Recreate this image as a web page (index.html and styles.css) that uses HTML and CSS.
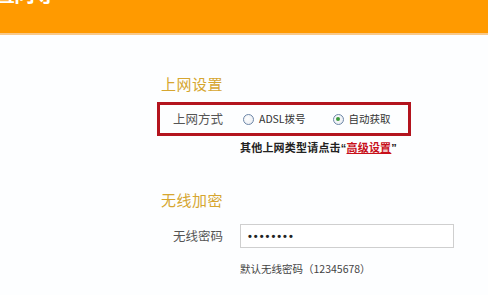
FILE: index.html
```html
<!DOCTYPE html>
<html lang="zh-CN">
<head>
<meta charset="utf-8">
<title>设置向导</title>
<link rel="stylesheet" href="styles.css">
</head>
<body>
<div class="header"><div class="title">设置向导</div></div>
<div class="main">
  <div class="section-title">上网设置</div>
  <div class="mode-box">
    <span class="label">上网方式</span>
    <span class="radio"></span><span class="opt">ADSL拨号</span>
    <span class="radio checked gap"></span><span class="opt">自动获取</span>
  </div>
  <div class="hint bold">其他上网类型请点击<span class="q">“</span><a class="link" href="#">高级设置</a><span class="q">”</span></div>
  <div class="section-title second">无线加密</div>
  <div class="row">
    <span class="label">无线密码</span>
    <div class="input"><span class="dots">••••••••</span></div>
  </div>
  <div class="hint note">默认无线密码（12345678）</div>
</div>
</body>
</html>
```
FILE: styles.css
```css
* { box-sizing: border-box; }
html, body { margin: 0; padding: 0; background: #fdfeff; }
body {
  width: 488px; height: 295px; overflow: hidden;
  font-family: "Noto Sans CJK SC", "Liberation Sans", sans-serif;
}
.header {
  height: 35px;
  background: #ff9a00;
  border-bottom: 2px solid #f8c98c;
  overflow: hidden;
}
.title {
  color: #fff;
  font-size: 21px;
  line-height: 21px;
  font-weight: bold;
  margin-top: -18px;
  margin-left: -26px;
  letter-spacing: -1px;
}
.main { padding: 41px 0 0 157px; }
.section-title {
  color: #d6a630;
  font-size: 15px;
  line-height: 16px;
  padding-left: 4px;
  letter-spacing: 0.5px;
}
.section-title.second { margin-top: 37px; }
.mode-box {
  margin-top: 10px;
  width: 254px;
  height: 34px;
  border: 3px solid #b3141e;
  display: flex;
  align-items: center;
  padding-left: 13px;
}
.label {
  width: 70px;
  font-size: 12.5px;
  color: #555;
  line-height: 14px;
}
.radio {
  width: 11px; height: 11px;
  border-radius: 50%;
  border: 1px solid #6c86a8;
  background: radial-gradient(circle at 40% 40%, #fff 0, #e4e8ee 100%);
  display: flex; align-items: center; justify-content: center;
  margin-right: 5px;
}
.radio.gap { margin-left: 27px; }
.radio.checked::after {
  content: "";
  width: 4px; height: 4px; border-radius: 50%;
  background: #3a9a3a;
}
.opt { font-size: 10.5px; color: #333; line-height: 14px; }
.hint {
  margin-left: 83px;
  font-size: 11px;
  line-height: 14px;
  color: #222;
}
.hint.bold { margin-top: 4px; font-weight: bold; letter-spacing: 0.2px; }
.q { font-family: "Liberation Sans", sans-serif; }
.link { color: #c8101a; text-decoration: underline; }
.row {
  margin-top: 16px;
  display: flex;
  align-items: center;
  padding-left: 16px;
}
.row .label { width: 67px; }
.input {
  width: 214px; height: 24px;
  border: 1px solid #cfcfcf;
  background: #fff;
  display: flex; align-items: center;
  padding-left: 7px;
}
.dots {
  font-family: "Liberation Sans", sans-serif;
  font-size: 11px; font-weight: bold;
  letter-spacing: 2px; color: #222;
}
.hint.note { margin-top: 14px; color: #444; font-size: 10.5px; }
```
